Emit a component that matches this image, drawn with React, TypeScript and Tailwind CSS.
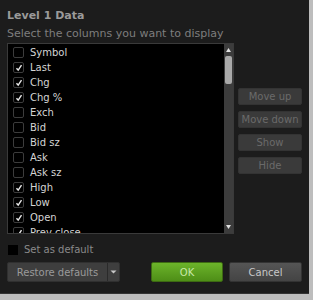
import { useState } from "react";

const COLUMNS: [string, boolean][] = [
  ["Symbol", false],
  ["Last", true],
  ["Chg", true],
  ["Chg %", true],
  ["Exch", false],
  ["Bid", false],
  ["Bid sz", false],
  ["Ask", false],
  ["Ask sz", false],
  ["High", true],
  ["Low", true],
  ["Open", true],
  ["Prev close", true],
];

function Check({ on }: { on: boolean }) {
  return (
    <span className="flex h-[11px] w-[11px] shrink-0 items-center justify-center rounded-[2px] border border-[#3c3c3c] bg-black">
      {on && (
        <svg width="8" height="8" viewBox="0 0 8 8">
          <path d="M1.5 4.2 L3.2 6.2 L6.5 1.2" fill="none" stroke="#e8e8e8" strokeWidth="1.4" />
        </svg>
      )}
    </span>
  );
}

function SideButton({ label }: { label: string }) {
  return (
    <button className="h-[17px] w-[64px] rounded-[2px] border border-[#333] bg-[#3a3a3a] text-[10px] leading-none text-[#6a6a6a]">
      {label}
    </button>
  );
}

export default function App() {
  const [cols, setCols] = useState(COLUMNS);

  return (
    <div
      className="flex h-[300px] w-[313px] flex-col bg-[#bdbdbd]"
      style={{ fontFamily: "'DejaVu Sans', Verdana, sans-serif" }}
    >
      <div className="flex h-[294px] w-[309px] flex-col border-b border-[#333] bg-[#1c1c1c] px-[7px]">
        <div className="mt-[9px] text-[11px] font-bold leading-[14px] text-[#9a9a9a]">Level 1 Data</div>
        <div className="mt-[4px] text-[11px] leading-[13px] text-[#7e7e7e]">
          Select the columns you want to display
        </div>

        <div className="mt-[3px] flex">
          <div className="flex h-[191px] w-[227px] border border-[#3a3a3a] bg-black">
            <div className="flex-1 overflow-hidden pt-[1px]">
              {cols.map(([name, on], i) => (
                <div
                  key={name}
                  className="flex h-[15px] cursor-default items-center gap-[6px] pl-[5px] text-[10px] text-[#d4d4d4]"
                  onClick={() =>
                    setCols(cols.map((c, j) => (j === i ? [c[0], !c[1]] : c)))
                  }
                >
                  <Check on={on} />
                  <span>{name}</span>
                </div>
              ))}
            </div>
            <div className="flex w-[9px] flex-col items-center bg-[#3c3c3c]">
              <svg width="7" height="6" viewBox="0 0 7 6" className="mt-[3px]">
                <path d="M3.5 1 L6 5 L1 5 Z" fill="#e0e0e0" />
              </svg>
              <div className="mt-[3px] h-[28px] w-[7px] rounded-[2px] bg-[#a9a9a9]" />
              <div className="flex-1" />
              <svg width="7" height="6" viewBox="0 0 7 6" className="mb-[3px]">
                <path d="M1 1 L6 1 L3.5 5 Z" fill="#e0e0e0" />
              </svg>
            </div>
          </div>

          <div className="ml-[4px] mt-[45px] flex flex-col gap-[6px]">
            <SideButton label="Move up" />
            <SideButton label="Move down" />
            <SideButton label="Show" />
            <SideButton label="Hide" />
          </div>
        </div>

        <div className="mt-[8px] flex items-center gap-[6px] pl-[1px]">
          <span className="h-[10px] w-[10px] bg-black" />
          <span className="text-[10px] text-[#8a8a8a]">Set as default</span>
        </div>

        <div className="mt-[5px] flex items-center">
          <div className="flex h-[20px] w-[113px] rounded-[2px] border border-[#303030] bg-[#3e3e3e]">
            <span className="flex flex-1 items-center justify-center text-[10px] text-[#9a9a9a]">
              Restore defaults
            </span>
            <span className="flex w-[12px] items-center justify-center border-l border-[#2a2a2a]">
              <svg width="7" height="4" viewBox="0 0 7 4">
                <path d="M0.5 0.5 L6.5 0.5 L3.5 3.5 Z" fill="#c8c8c8" />
              </svg>
            </span>
          </div>
          <button className="ml-[31px] h-[20px] w-[72px] rounded-[2px] border border-[#3d6a12] bg-gradient-to-b from-[#6cb42a] to-[#4e8e17] text-[10px] text-[#c8e8a8]">
            OK
          </button>
          <button className="ml-[6px] h-[20px] w-[73px] rounded-[2px] border border-[#333] bg-gradient-to-b from-[#555] to-[#444] text-[10px] text-[#c8c8c8]">
            Cancel
          </button>
        </div>
      </div>
    </div>
  );
}
